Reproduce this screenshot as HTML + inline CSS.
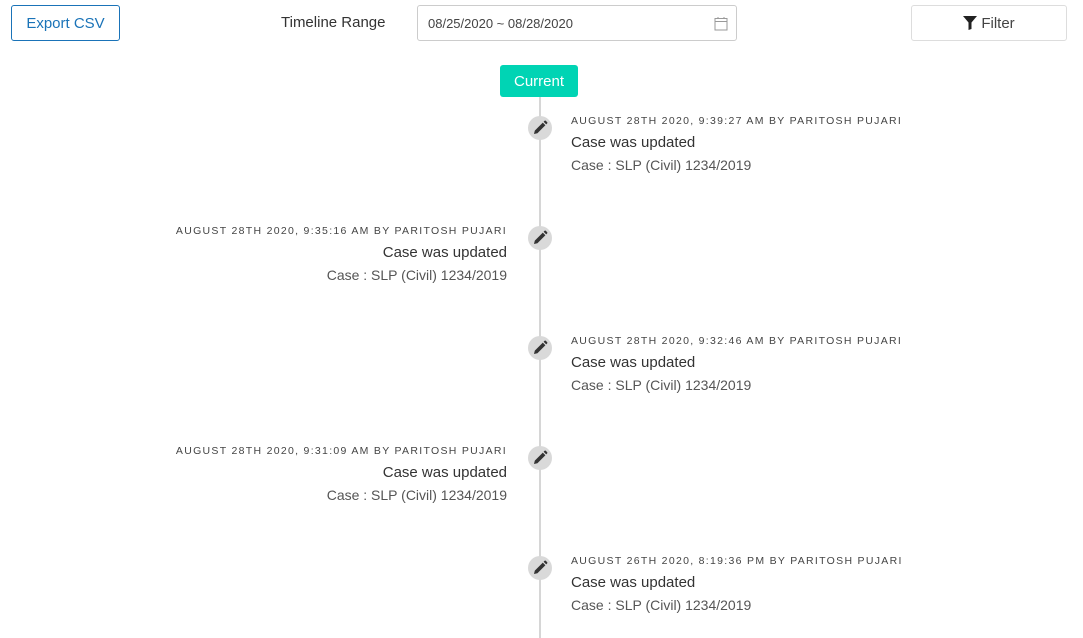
<!DOCTYPE html>
<html><head><style>
body{margin:0;width:1083px;height:638px;background:#fff;font-family:"Liberation Sans",sans-serif;position:relative;overflow:hidden;color:#333}
.a{position:absolute}
.btn{box-sizing:border-box;border-radius:3px}
.meta{font-size:10.5px;letter-spacing:1.3px;color:#444;white-space:nowrap}
.t{font-size:15px;color:#333;white-space:nowrap}
.c{font-size:14px;color:#555;white-space:nowrap}
.ic{width:24px;height:24px;border-radius:50%;background:#d9d9d9;left:528px}
.L{text-align:right;right:576px}
.R{left:571px}
</style></head><body>
<div class="a btn" style="left:11px;top:5px;width:109px;height:36px;border:1px solid #1a73b8;color:#1a73b8;font-size:15px;line-height:36px;text-align:center">Export CSV</div>
<div class="a" style="left:281px;top:14px;font-size:15px;color:#333">Timeline Range</div>
<div class="a btn" style="left:417px;top:5px;width:320px;height:36px;border:1px solid #ccc;font-size:13px;line-height:35px;padding-left:10px;color:#444">08/25/2020 ~ 08/28/2020
<svg class="a" style="right:8px;top:10px" width="14" height="15" viewBox="0 0 14 15" fill="none" stroke="#999" stroke-width="1"><rect x="1" y="2.5" width="12" height="11.5"/><line x1="1" y1="5.5" x2="13" y2="5.5"/><line x1="4" y1="1" x2="4" y2="3"/><line x1="10" y1="1" x2="10" y2="3"/></svg></div>
<div class="a btn" style="left:911px;top:5px;width:156px;height:36px;border:1px solid #ddd;font-size:15px;line-height:35px;text-align:center;color:#444">
<svg width="14" height="14" viewBox="0 0 14 14" style="vertical-align:-2px;margin-right:4px"><path d="M0 0H14L8.5 6.5V13L5.5 14V6.5Z" fill="#222"/></svg>Filter</div>
<div class="a" style="left:539px;top:96px;width:2px;height:542px;background:#d6d6d6"></div>
<div class="a btn" style="left:500px;top:65px;width:78px;height:32px;background:#00d4b4;color:#fff;font-size:15px;line-height:33px;text-align:center">Current</div>

<div id="e"></div>
<script>
const d=["AUGUST 28TH 2020, 9:39:27 AM BY PARITOSH PUJARI","AUGUST 28TH 2020, 9:35:16 AM BY PARITOSH PUJARI","AUGUST 28TH 2020, 9:32:46 AM BY PARITOSH PUJARI","AUGUST 28TH 2020, 9:31:09 AM BY PARITOSH PUJARI","AUGUST 26TH 2020, 8:19:36 PM BY PARITOSH PUJARI"];
let h="";
d.forEach((m,i)=>{const y=116+i*110;const s=i%2?"L":"R";
h+=`<div class="a ic" style="top:${y}px"><svg width="24" height="24" viewBox="0 0 24 24"><path d="M6 18L6.8 14.6L14.8 6.6L17.4 9.2L9.4 17.2Z M15.6 5.8L16.6 4.8Q17.2 4.3 17.8 4.8L19.2 6.2Q19.7 6.8 19.2 7.4L18.2 8.4Z" fill="#333"/></svg></div>
<div class="a ${s}" style="top:${y-1}px"><div class="meta" style="height:19px">${m}</div><div class="t" style="height:23px">Case was updated</div><div class="c">Case : SLP (Civil) 1234/2019</div></div>`;});
document.getElementById("e").innerHTML=h;
</script>
</body></html>
